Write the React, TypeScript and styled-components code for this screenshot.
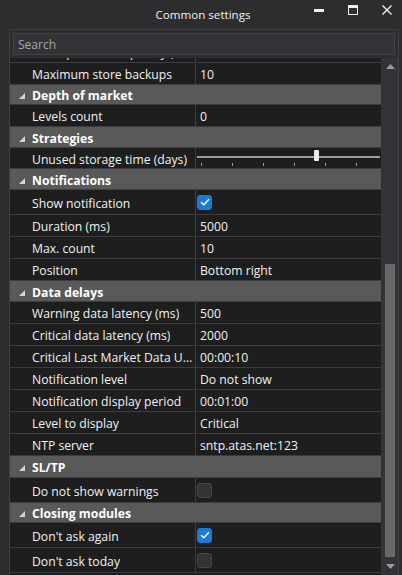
import React from "react";
import styled, { createGlobalStyle } from "styled-components";

const Global = createGlobalStyle`
  html, body { margin: 0; padding: 0; background: #2d2d30; }
  body { font-family: "Open Sans", "Noto Sans", sans-serif; }
  * { box-sizing: border-box; }
`;

const Window = styled.div`
  width: 402px;
  height: 575px;
  background: #2d2d30;
  display: flex;
  flex-direction: column;
  overflow: hidden;
  color: #f1f1f1;
`;

const TitleBar = styled.div`
  height: 29px;
  flex: none;
  display: grid;
  grid-template-columns: 1fr auto 1fr;
  align-items: center;
`;

const Title = styled.div`
  grid-column: 2;
  font-size: 11.6px;
  color: #f1f1f1;
  padding-left: 4px;
`;

const Controls = styled.div`
  grid-column: 3;
  justify-self: end;
  display: flex;
  align-items: center;
  gap: 24px;
  margin-right: 10px;
  height: 29px;
`;

const Minimize = styled.div`
  width: 10px;
  height: 3px;
  background: #f0f0f0;
  margin-top: -8px;
`;

const Maximize = styled.div`
  width: 10px;
  height: 10px;
  border: 1.5px solid #f0f0f0;
  border-top-width: 3px;
  margin-top: -9px;
`;

const CloseIcon = styled.svg`
  width: 10px;
  height: 10px;
  margin-top: -9px;
`;

const Panel = styled.div`
  flex: 1;
  margin: 0 3px 0 9px;
  border: 1px solid #3f3f46;
  border-bottom: none;
  display: flex;
  flex-direction: column;
  min-height: 0;
`;

const SearchBox = styled.div`
  margin: 3px 3px 0 3px;
  height: 22px;
  background: #333337;
  border: 1px solid #434346;
  display: flex;
  align-items: center;
  padding-left: 4px;
  padding-top: 1px;
  font-size: 12px;
  color: #a8a8a8;
  flex: none;
`;

const GridArea = styled.div`
  margin-top: 3px;
  flex: 1;
  display: grid;
  grid-template-columns: 371px 17px;
  min-height: 0;
`;

const Viewport = styled.div`
  overflow: hidden;
  background: #1e1e1e;
`;

const Content = styled.div`
  margin-top: -17px;
`;

const Row = styled.div<{ $h: number }>`
  display: grid;
  grid-template-columns: 186px 185px;
  height: ${(p) => p.$h}px;
  border-bottom: 1px solid #3c3c40;
  background: #1e1e1e;
`;

const NameCell = styled.div`
  border-right: 1px solid #3c3c40;
  padding: 2px 2px 0 22px;
  display: flex;
  align-items: center;
  font-size: 12.2px;
  color: #f1f1f1;
  overflow: hidden;
  min-width: 0;
`;

const NameText = styled.span`
  white-space: nowrap;
  overflow: hidden;
  text-overflow: ellipsis;
  display: block;
  min-width: 0;
`;

const ValueCell = styled.div<{ $text: boolean }>`
  padding-left: 4px;
  padding-top: ${(p) => (p.$text ? 2 : 0)}px;
  display: flex;
  align-items: center;
  font-size: 12.2px;
  color: #f1f1f1;
  min-width: 0;
`;

const Header = styled.div<{ $h: number }>`
  height: ${(p) => p.$h}px;
  background: #595959;
  border-bottom: 1px solid #3c3c40;
  display: flex;
  align-items: center;
  gap: 7px;
  padding: 2px 0 0 9px;
  font-size: 12.2px;
  font-weight: 700;
  color: #ffffff;
`;

const Expander = styled.svg`
  width: 6px;
  height: 6px;
  flex: none;
  margin-top: 1px;
`;

const Box = styled.div<{ $on: boolean }>`
  width: 15px;
  height: 15px;
  border-radius: 3px;
  margin-left: -3px;
  background: ${(p) => (p.$on ? "#1a7bd6" : "#333337")};
  border: 1px solid ${(p) => (p.$on ? "#1a7bd6" : "#46464a")};
  display: flex;
  align-items: center;
  justify-content: center;
`;

const SliderWrap = styled.div`
  flex: 1;
  margin-left: -3px;
  margin-right: 1px;
  height: 100%;
  display: flex;
  flex-direction: column;
  justify-content: center;
  position: relative;
`;

const Track = styled.div`
  height: 2px;
  background: #9c9c9c;
  margin-top: -2px;
`;

const Thumb = styled.div`
  position: absolute;
  top: 2px;
  width: 5px;
  height: 11px;
  background: #ececec;
  border-radius: 1px;
`;

const Ticks = styled.div`
  position: absolute;
  top: 15px;
  left: 4px;
  right: 0;
  display: flex;
  gap: 30px;
`;

const Tick = styled.div`
  width: 1px;
  height: 3px;
  background: #9c9c9c;
`;

const ScrollBar = styled.div`
  background: #333337;
  display: flex;
  flex-direction: column;
  align-items: center;
  padding: 0 2px 0 3px;
`;

const Arrow = styled.svg`
  width: 9px;
  height: 5px;
  flex: none;
`;

const ArrowSlot = styled.div`
  height: 17px;
  display: flex;
  align-items: center;
  justify-content: center;
  flex: none;
`;

const TrackArea = styled.div`
  flex: 1;
  width: 100%;
  display: flex;
  flex-direction: column;
`;

const ScrollThumb = styled.div`
  background: #686868;
  width: 10px;
  margin-left: 1px;
`;

type Item =
  | { kind: "header"; label: string; h?: number }
  | { kind: "text"; name: string; value: string }
  | { kind: "check"; name: string; checked: boolean }
  | { kind: "slider"; name: string; pos: number };

const items: Item[] = [
  { kind: "text", name: "Backup store frequency (days)", value: "1" },
  { kind: "text", name: "Maximum store backups", value: "10" },
  { kind: "header", label: "Depth of market", h: 20 },
  { kind: "text", name: "Levels count", value: "0" },
  { kind: "header", label: "Strategies" },
  { kind: "slider", name: "Unused storage time (days)", pos: 117 },
  { kind: "header", label: "Notifications" },
  { kind: "check", name: "Show notification", checked: true },
  { kind: "text", name: "Duration (ms)", value: "5000" },
  { kind: "text", name: "Max. count", value: "10" },
  { kind: "text", name: "Position", value: "Bottom right" },
  { kind: "header", label: "Data delays" },
  { kind: "text", name: "Warning data latency (ms)", value: "500" },
  { kind: "text", name: "Critical data latency (ms)", value: "2000" },
  { kind: "text", name: "Critical Last Market Data Update", value: "00:00:10" },
  { kind: "text", name: "Notification level", value: "Do not show" },
  { kind: "text", name: "Notification display period", value: "00:01:00" },
  { kind: "text", name: "Level to display", value: "Critical" },
  { kind: "text", name: "NTP server", value: "sntp.atas.net:123" },
  { kind: "header", label: "SL/TP", h: 22 },
  { kind: "check", name: "Do not show warnings", checked: false },
  { kind: "header", label: "Closing modules", h: 20 },
  { kind: "check", name: "Don't ask again", checked: true },
  { kind: "check", name: "Don't ask today", checked: false },
];

function Check({ on }: { on: boolean }) {
  return (
    <Box $on={on}>
      {on && (
        <svg width="10" height="8" viewBox="0 0 10 8">
          <path d="M1 4.2 L3.8 6.8 L9 1.2" fill="none" stroke="#ffffff" strokeWidth="1.4" />
        </svg>
      )}
    </Box>
  );
}

function Slider({ pos }: { pos: number }) {
  return (
    <SliderWrap>
      <Track />
      <Thumb style={{ left: pos }} />
      <Ticks>
        {Array.from({ length: 6 }).map((_, i) => (
          <Tick key={i} />
        ))}
      </Ticks>
    </SliderWrap>
  );
}

function renderItem(it: Item, i: number) {
  if (it.kind === "header") {
    return (
      <Header key={i} $h={it.h ?? 21}>
        <Expander viewBox="0 0 6 6">
          <polygon points="6,0 6,6 0,6" fill="#d4d4d4" />
        </Expander>
        {it.label}
      </Header>
    );
  }
  const h = it.kind === "check" ? 25 : it.kind === "slider" ? 21 : 22;
  return (
    <Row key={i} $h={h}>
      <NameCell>
        <NameText>{it.name}</NameText>
      </NameCell>
      <ValueCell $text={it.kind === "text"}>
        {it.kind === "text" && it.value}
        {it.kind === "check" && <Check on={it.checked} />}
        {it.kind === "slider" && <Slider pos={it.pos} />}
      </ValueCell>
    </Row>
  );
}

export default function App() {
  return (
    <>
      <Global />
      <Window>
        <TitleBar>
          <Title>Common settings</Title>
          <Controls>
            <Minimize />
            <Maximize />
            <CloseIcon viewBox="0 0 10 10">
              <path d="M0.5 0.5 L9.5 9.5 M9.5 0.5 L0.5 9.5" stroke="#f0f0f0" strokeWidth="1.4" />
            </CloseIcon>
          </Controls>
        </TitleBar>
        <Panel>
          <SearchBox>Search</SearchBox>
          <GridArea>
            <Viewport>
              <Content>{items.map(renderItem)}</Content>
            </Viewport>
            <ScrollBar>
              <ArrowSlot>
                <Arrow viewBox="0 0 9 5">
                  <polygon points="4.5,0 9,5 0,5" fill="#9a9a9a" />
                </Arrow>
              </ArrowSlot>
              <TrackArea>
                <div style={{ height: 189 }} />
                <ScrollThumb style={{ height: 293 }} />
              </TrackArea>
              <ArrowSlot>
                <Arrow viewBox="0 0 9 5">
                  <polygon points="0,0 9,0 4.5,5" fill="#9a9a9a" />
                </Arrow>
              </ArrowSlot>
            </ScrollBar>
          </GridArea>
        </Panel>
      </Window>
    </>
  );
}
